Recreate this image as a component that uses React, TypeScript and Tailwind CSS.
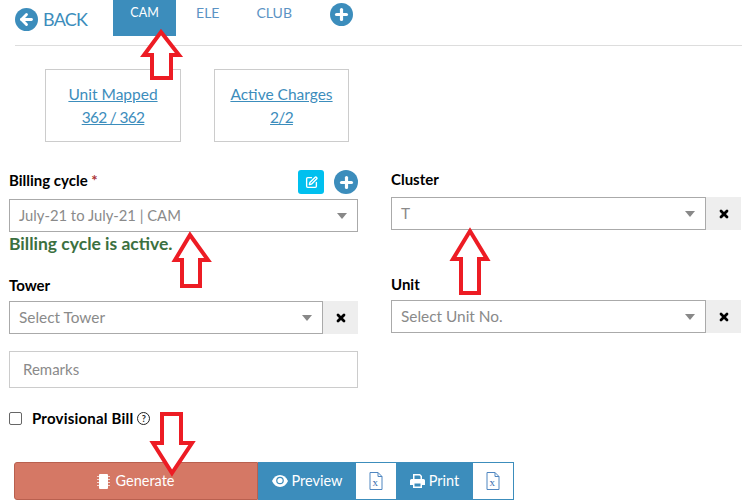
import React from "react";
import { ArrowLeft, Plus, X, SquarePen } from "lucide-react";

const font = { fontFamily: '"Lato", "Open Sans", sans-serif' };

const CirclePlus = ({ className }: { className: string }) => (
  <span className={`flex items-center justify-center rounded-full bg-[#3c8dbc] ${className}`}>
    <Plus size={17} strokeWidth={4.5} className="text-white" />
  </span>
);

const Caret = () => <span className="ml-auto h-0 w-0 border-x-[5px] border-t-[6px] border-x-transparent border-t-[#888]" />;

const Select = ({ text, clear, size = "text-[15.4px]" }: { text: string; clear?: boolean; size?: string }) => (
  <div className="flex h-[33px]">
    <div className={`flex flex-1 items-center border border-[#aaa] pl-[9px] pr-[10px] text-[#8a8a8a] ${size}`}>
      <span>{text}</span>
      <Caret />
    </div>
    {clear && (
      <div className="flex w-[35px] items-center justify-center bg-[#eeeeee]">
        <X size={12} strokeWidth={5.5} className="text-black" />
      </div>
    )}
  </div>
);

const XlsIcon = () => (
  <svg width="14" height="18" viewBox="0 0 14 18" fill="none">
    <path d="M1 .5h8l4 4v13H1z" fill="#fff" stroke="#4f86c0" />
    <path d="M9 .5v4h4" stroke="#4f86c0" />
    <text x="3.5" y="14" fontSize="11" fill="#3a6fb0" fontFamily="Liberation Serif, serif">x</text>
  </svg>
);

const ChipIcon = () => (
  <svg width="13" height="15" viewBox="0 0 13 15" fill="#fff">
    <rect x="2" y="0" width="9" height="15" rx="1" />
    <path d="M0 2h2v1H0zM0 5h2v1H0zM0 8h2v1H0zM0 11h2v1H0zM11 2h2v1h-2zM11 5h2v1h-2zM11 8h2v1h-2zM11 11h2v1h-2z" opacity=".7" />
  </svg>
);

const EyeIcon = () => (
  <svg width="16" height="12" viewBox="0 0 16 12">
    <path d="M8 0C4.500 0 1.700 2.300 0 6c1.700 3.700 4.500 6 8 6s6.300-2.300 8-6c-1.700-3.700-4.500-6-8-6z" fill="#fff" />
    <circle cx="8" cy="5.500" r="3.800" fill="#3c8dbc" />
    <circle cx="8" cy="5.500" r="2.600" fill="#fff" />
  </svg>
);

const PrintIcon = () => (
  <svg width="15" height="14" viewBox="0 0 15 14" fill="#fff">
    <path d="M3 0h7l2 2v3h-1.500V2.500L9.500 1.500h-5V5H3z" />
    <path d="M1.500 5h12A1.500 1.500 0 0 1 15 6.500V11h-3v3H3v-3H0V6.500A1.500 1.500 0 0 1 1.500 5z" />
    <rect x="4.500" y="9.500" width="6" height="3" fill="#3c8dbc" />
  </svg>
);

const Arrow = ({ points }: { points: string }) => (
  <polygon points={points} fill="#fff" stroke="#ed1c24" strokeWidth="4" strokeLinejoin="miter" />
);

export default function App() {
  return (
    <div className="relative h-[504px] w-[742px] overflow-hidden bg-white" style={font}>
      {/* header */}
      <div className="ml-[15px] flex h-[46px] items-start border-b border-[#dddddd]">
        <div className="mt-[7px] flex items-center gap-[5px] text-[18px] leading-[24px] tracking-[-0.8px] text-[#3c8dbc]">
          <span className="flex h-[23px] w-[23px] items-center justify-center rounded-full bg-[#3c8dbc]">
            <ArrowLeft size={17} strokeWidth={4} className="text-white" />
          </span>
          BACK
        </div>
        <div className="ml-[26px] flex h-[36px] w-[63px] items-start justify-center bg-[#3c8dbc] pt-[4px] text-[12.5px] leading-[18px] text-white">CAM</div>
        <div className="ml-[20px] pt-[4px] text-[14px] leading-[18px] text-[#5b93c4]">ELE</div>
        <div className="ml-[37px] pt-[4px] text-[14px] leading-[18px] text-[#5b93c4]">CLUB</div>
        <CirclePlus className="ml-[38px] mt-[3px] h-[23px] w-[23px]" />
      </div>

      {/* cards */}
      <div className="ml-[45px] mt-[23px] flex gap-[33px]">
        {[["Unit Mapped", "362 / 362", "w-[136px]"], ["Active Charges", "2/2", "w-[135px]"]].map(([a, b, w]) => (
          <div key={a} className={`flex h-[73px] flex-col items-center justify-center border border-[#cccccc] text-[15.5px] leading-[23px] text-[#3c8dbc] underline ${w}`}>
            <span>{a}</span>
            <span className="tracking-[-0.7px]">{b}</span>
          </div>
        ))}
      </div>

      {/* form */}
      <div className="ml-[9px] mt-[27px] flex gap-[33px]">
        <div className="flex w-[349px] flex-col">
          <div className="flex h-[30px] items-start">
            <span className="pt-[2px] text-[15px] font-bold leading-[18px] text-black">
              Billing cycle <span className="text-[#a33]">*</span>
            </span>
            <span className="ml-auto mt-px flex h-[24px] w-[26px] items-center justify-center rounded-[3px] bg-[#00c0ef]">
              <SquarePen size={13} strokeWidth={2.5} className="text-white" />
            </span>
            <CirclePlus className="ml-[10px] mt-px h-[24px] w-[24px]" />
          </div>
          <Select text="July-21 to July-21 | CAM" size="text-[14.8px]" />
          <div className="h-[24px] text-[17.5px] font-bold leading-[24px] text-[#3b7040]">Billing cycle is active.</div>
          <div className="mt-[20px] h-[25px] text-[15px] font-bold leading-[18px] text-black">Tower</div>
          <Select text="Select Tower" clear />
          <div className="mt-[17px] flex h-[37px] items-center border border-[#cccccc] pl-[13px] text-[15px] text-[#8a8a8a]">Remarks</div>
          <div className="mt-[21px] flex items-center">
            <span className="h-[13px] w-[13px] rounded-[2px] border border-[#666] bg-white" />
            <span className="ml-[10px] text-[15px] font-bold leading-[18px] tracking-[0.2px] text-black">Provisional Bill</span>
            <span className="ml-[4px] flex h-[13px] w-[13px] items-center justify-center rounded-full border border-[#222] text-[9px] font-bold leading-none text-[#222]">?</span>
          </div>
        </div>
        <div className="flex w-[350px] flex-col">
          <div className="h-[28px] pt-[1px] text-[15px] font-bold leading-[18px] text-black">Cluster</div>
          <Select text="T" clear />
          <div className="mt-[45px] h-[25px] text-[15px] font-bold leading-[18px] text-black">Unit</div>
          <Select text="Select Unit No." clear />
        </div>
      </div>

      {/* actions */}
      <div className="ml-[14px] mt-[35px] flex h-[38px] w-[500px] text-[14.5px] text-white">
        <div className="flex w-[244px] items-center justify-center gap-[5px] rounded-l-[3px] border border-[#b9604f] bg-[#d57865]">
          <ChipIcon />
          Generate
        </div>
        <div className="flex w-[98px] items-center justify-center gap-[4px] border-y border-[#3c8dbc] bg-[#3c8dbc]">
          <EyeIcon />
          Preview
        </div>
        <div className="flex w-[40px] items-center justify-center border-y border-[#3c8dbc] bg-white"><XlsIcon /></div>
        <div className="flex w-[77px] items-center justify-center gap-[4px] border-y border-[#3c8dbc] bg-[#3c8dbc]">
          <PrintIcon />
          Print
        </div>
        <div className="flex w-[41px] items-center justify-center border border-l-0 border-[#3c8dbc] bg-white"><XlsIcon /></div>
      </div>

      {/* red annotation arrows */}
      <svg className="pointer-events-none absolute left-0 top-0" width="742" height="504">
        <Arrow points="161,32 179,55 171,55 171,78 152,78 152,55 144,55" />
        <Arrow points="190,235 208,260 200,260 200,286 182,286 182,260 175,260" />
        <Arrow points="470,231 487,259 479,259 479,293 461,293 461,259 453,259" />
        <Arrow points="172,473 192,443 181,443 181,414 162,414 162,443 153,443" />
      </svg>
    </div>
  );
}
